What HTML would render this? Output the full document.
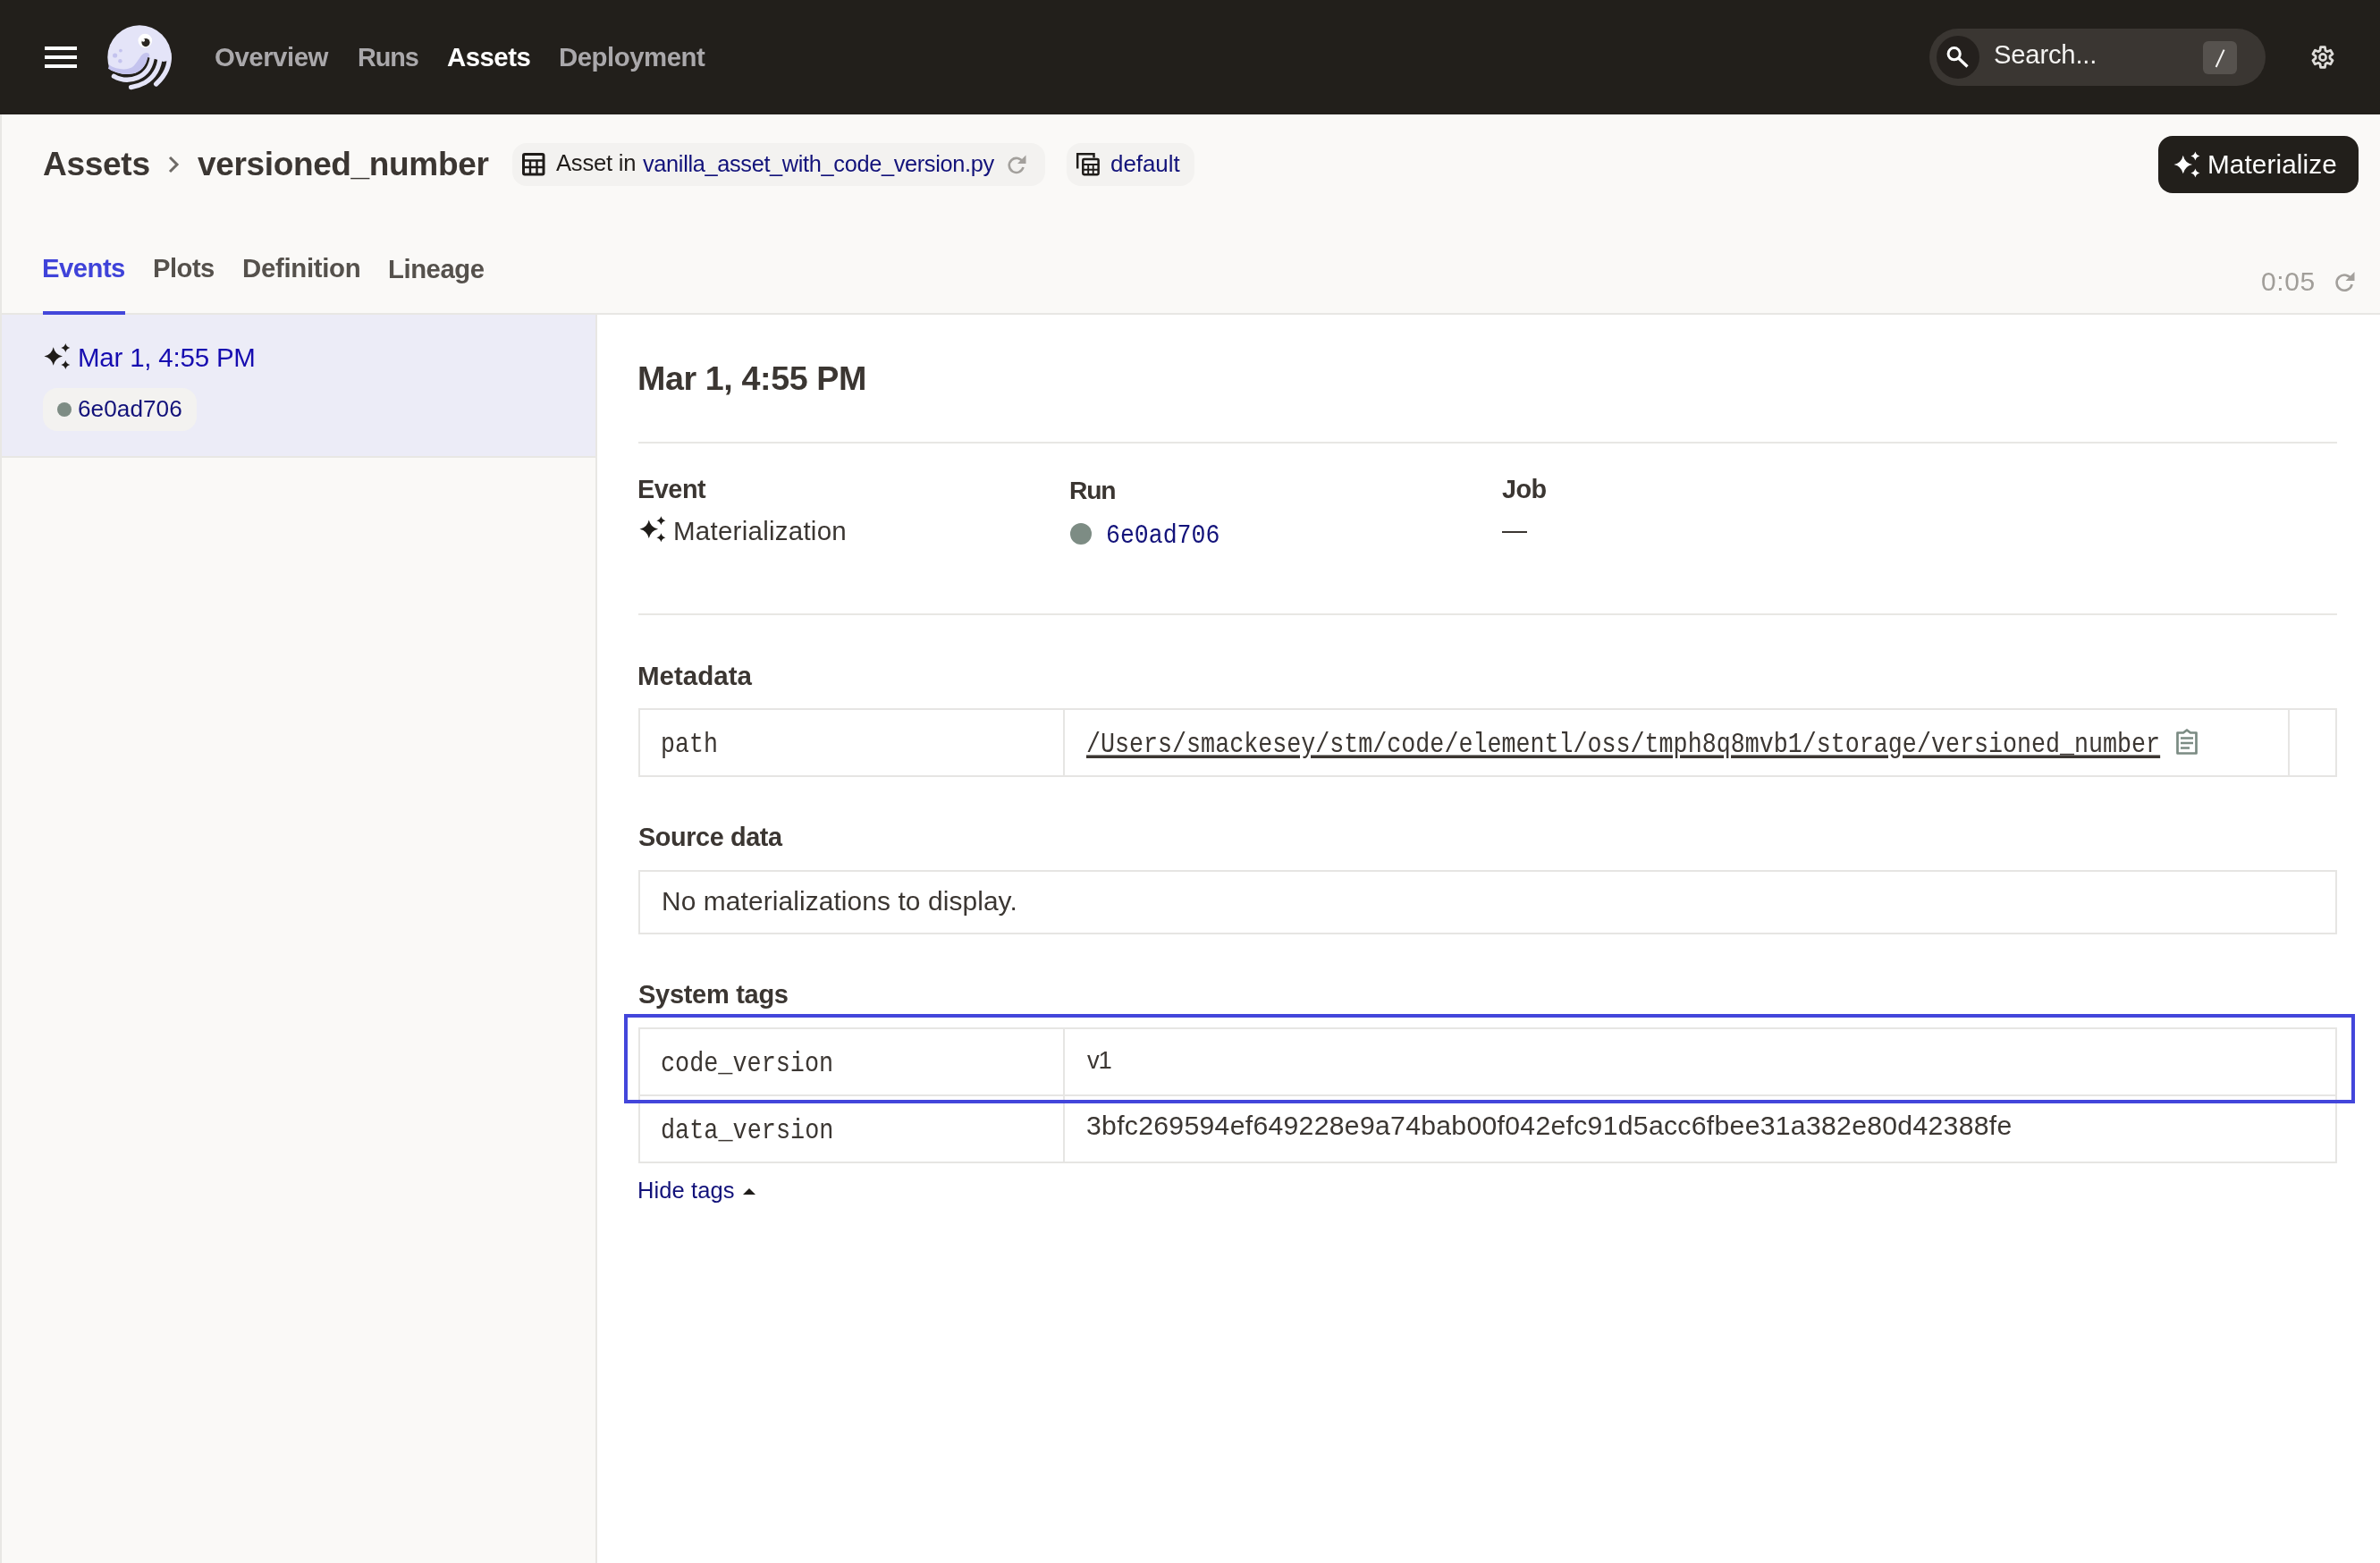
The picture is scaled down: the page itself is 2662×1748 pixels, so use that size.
<!DOCTYPE html>
<html><head><meta charset="utf-8">
<style>
html,body{margin:0;padding:0;width:2662px;height:1748px;overflow:hidden;background:#FAF9F7;}
body{position:relative;font-family:"Liberation Sans",sans-serif;}
.tx{position:absolute;white-space:pre;will-change:transform;}
.b{position:absolute;box-sizing:border-box;}
svg{position:absolute;overflow:visible;}
</style></head>
<body>
<!-- ===== header ===== -->
<div class="b" style="left:0;top:0;width:2662px;height:128px;background:#221F1B"></div>
<div class="b" style="left:50px;top:52px;width:36px;height:4px;background:#fff"></div>
<div class="b" style="left:50px;top:62px;width:36px;height:4px;background:#fff"></div>
<div class="b" style="left:50px;top:72px;width:36px;height:4px;background:#fff"></div>

<!-- logo -->
<svg style="left:115px;top:22px" width="82" height="82" viewBox="0 0 82 82">
  <defs>
    <clipPath id="lgbody">
      <path d="M0 0 H82 V45 L76 45.5 L67.7 47 L59.3 44.3 L50 42 C48.6 51.5 42.5 58.8 33 60.6 C24 62.2 14 59.8 4 54 L0 54 Z"/>
    </clipPath>
  </defs>
  <circle cx="41" cy="42" r="35.7" fill="#E4E4F8" clip-path="url(#lgbody)"/>
  <path d="M7 50.5 C15 56 27 57 33 53 C38 49.5 41 41 45.5 38 C48.5 36.3 52.3 37 52.3 40.5 L50 44 C48.6 51.5 42.5 58.8 33 60.6 C24 62.2 14 59.8 6 55 Z" fill="#C4C3EE" clip-path="url(#lgbody)"/>
  <circle cx="13.6" cy="40" r="2.6" fill="#C4C3EE"/>
  <circle cx="19.9" cy="34.6" r="1.9" fill="#C4C3EE"/>
  <circle cx="19.4" cy="46.2" r="2.2" fill="#C4C3EE"/>
  <circle cx="47.3" cy="23.6" r="7.8" fill="#FFFFFF"/>
  <circle cx="48" cy="25.6" r="4.6" fill="#2A2622"/>
  <circle cx="45.4" cy="23.0" r="1.7" fill="#FFFFFF"/>
  <g fill="none" stroke="#E4E4F8" stroke-width="5.3" stroke-linecap="round">
    <path d="M55.5 40 C54.5 51 49 60.5 39 64.8 C30 68.5 20 67.5 12.4 63.2"/>
    <path d="M64 42 C63.5 54 57 65 47 70.5 C42 73.2 37 74.8 31.6 75.6"/>
    <path d="M74 38 C75.5 50 71 61.5 59.6 72"/>
  </g>
</svg>

<!-- search -->
<div class="b" style="left:2158px;top:32px;width:376px;height:64px;border-radius:32px;background:#3A3632"></div>
<div class="b" style="left:2166px;top:40px;width:48px;height:48px;border-radius:24px;background:#24201D"></div>
<svg style="left:2166px;top:40px" width="48" height="48" viewBox="0 0 48 48">
  <circle cx="19.7" cy="20.2" r="6.6" fill="none" stroke="#FFFFFF" stroke-width="3"/>
  <path d="M24.5 25 L34.5 34.5" stroke="#FFFFFF" stroke-width="3.2" stroke-linecap="butt"/>
</svg>
<div class="b" style="left:2464px;top:46px;width:38px;height:37px;border-radius:6px;background:#56524E"></div>
<svg style="left:2464px;top:46px" width="38" height="37" viewBox="0 0 38 37">
  <path d="M23.6 9.6 L14.6 29" stroke="#F4F3F1" stroke-width="2" stroke-linecap="butt"/>
</svg>
<!-- gear -->
<svg style="left:2584px;top:50px" width="28" height="28" viewBox="0 0 28 28">
  <g transform="translate(14 14)" fill="none" stroke="#DEDCD9" stroke-width="2.8" stroke-linejoin="round">
    <path d="M-3.00 -7.42 L-2.41 -11.35 L2.41 -11.35 L3.00 -7.42 L4.93 -6.30 L8.62 -7.76 L11.03 -3.58 L7.92 -1.11 L7.92 1.11 L11.03 3.58 L8.62 7.76 L4.93 6.30 L3.00 7.42 L2.41 11.35 L-2.41 11.35 L-3.00 7.42 L-4.93 6.30 L-8.62 7.76 L-11.03 3.58 L-7.92 1.11 L-7.92 -1.11 L-11.03 -3.58 L-8.62 -7.76 L-4.93 -6.30 Z"/>
    <circle r="3.6" stroke-width="2.6"/>
  </g>
</svg>

<!-- ===== page ===== -->
<div class="b" style="left:0;top:128px;width:2px;height:1620px;background:#E8E7E4"></div>
<div class="b" style="left:2px;top:350px;width:2660px;height:2px;background:#E8E7E4"></div>

<!-- breadcrumb chevron -->
<svg style="left:186px;top:172px" width="16" height="24" viewBox="0 0 16 24">
  <path d="M4 4 L12 12 L4 20" fill="none" stroke="#6E6A66" stroke-width="3"/>
</svg>

<!-- tag 1 -->
<div class="b" style="left:573px;top:160px;width:596px;height:48px;border-radius:16px;background:#F3F2F0"></div>
<svg style="left:584px;top:171px" width="26" height="26" viewBox="0 0 26 26">
  <rect x="1.5" y="1.5" width="22.5" height="22.5" rx="1.5" fill="none" stroke="#1F1C19" stroke-width="3"/>
  <path d="M1.5 8.5 H24 M1.5 16 H24 M9 8.5 V24 M16.5 8.5 V24" stroke="#1F1C19" stroke-width="2.4"/>
</svg>
<svg style="left:1125px;top:172px" width="24" height="24" viewBox="0 0 24 24">
  <path d="M19 9.5 A8 8 0 1 0 19.5 15" fill="none" stroke="#A3A09C" stroke-width="2.6"/>
  <path d="M22.5 1.5 V11 H13 Z" fill="#A3A09C"/>
</svg>
<!-- tag 2 -->
<div class="b" style="left:1193px;top:160px;width:143px;height:48px;border-radius:16px;background:#F3F2F0"></div>
<svg style="left:1203px;top:170px" width="28" height="28" viewBox="0 0 28 28">
  <path d="M2.2 18.5 V2.3 H20.5 V6.5" fill="none" stroke="#1F1C19" stroke-width="2.5"/>
  <rect x="8.3" y="7.9" width="17.3" height="17.4" rx="1.2" fill="none" stroke="#1F1C19" stroke-width="2.5"/>
  <path d="M8.3 14 H25.6 M8.3 19.8 H25.6 M14.2 14 V25.3 M19.7 14 V25.3" stroke="#1F1C19" stroke-width="1.9"/>
</svg>

<!-- materialize button -->
<div class="b" style="left:2414px;top:152px;width:224px;height:64px;border-radius:16px;background:#221F1B"></div>
<svg style="left:2430px;top:168px" width="32" height="32" viewBox="0 0 32 32">
  <g fill="#FFFFFF">
    <path d="M11.80 5.70 Q13.65 14.15 22.10 16.00 Q13.65 17.85 11.80 26.30 Q9.95 17.85 1.50 16.00 Q9.95 14.15 11.80 5.70 Z M25.40 1.50 Q26.30 5.60 30.40 6.50 Q26.30 7.40 25.40 11.50 Q24.50 7.40 20.40 6.50 Q24.50 5.60 25.40 1.50 Z M25.40 20.50 Q26.30 24.60 30.40 25.50 Q26.30 26.40 25.40 30.50 Q24.50 26.40 20.40 25.50 Q24.50 24.60 25.40 20.50 Z"/>
  </g>
</svg>

<!-- tab underline -->
<div class="b" style="left:48px;top:348px;width:92px;height:4px;background:#4347DA"></div>
<!-- refresh near time -->
<svg style="left:2609px;top:302px" width="26" height="26" viewBox="0 0 26 26">
  <path d="M21 10.5 A8.6 8.6 0 1 0 21.6 16" fill="none" stroke="#A3A09C" stroke-width="2.6"/>
  <path d="M24.5 2 V12 H14.5 Z" fill="#A3A09C"/>
</svg>

<!-- ===== sidebar ===== -->
<div class="b" style="left:2px;top:352px;width:664px;height:158px;background:#ECECF7"></div>
<div class="b" style="left:2px;top:510px;width:664px;height:2px;background:#E8E7E4"></div>
<div class="b" style="left:666px;top:352px;width:2px;height:1396px;background:#E8E7E4"></div>
<svg style="left:48px;top:382px" width="32" height="32" viewBox="0 0 32 32">
  <g fill="#1F1C19"><path d="M11.70 6.20 Q13.55 14.65 22.00 16.50 Q13.55 18.35 11.70 26.80 Q9.85 18.35 1.40 16.50 Q9.85 14.65 11.70 6.20 Z M25.30 2.00 Q26.20 6.10 30.30 7.00 Q26.20 7.90 25.30 12.00 Q24.40 7.90 20.30 7.00 Q24.40 6.10 25.30 2.00 Z M25.30 21.00 Q26.20 25.10 30.30 26.00 Q26.20 26.90 25.30 31.00 Q24.40 26.90 20.30 26.00 Q24.40 25.10 25.30 21.00 Z"/></g>
</svg>
<div class="b" style="left:48px;top:434px;width:172px;height:48px;border-radius:16px;background:#F3F2F0"></div>
<div class="b" style="left:64px;top:449.5px;width:16px;height:16px;border-radius:8px;background:#7D8C84"></div>

<!-- ===== main ===== -->
<div class="b" style="left:668px;top:352px;width:1994px;height:1396px;background:#FFFFFF"></div>
<div class="b" style="left:714px;top:494px;width:1900px;height:2px;background:#E8E7E4"></div>
<div class="b" style="left:714px;top:686px;width:1900px;height:2px;background:#E8E7E4"></div>
<svg style="left:713px;top:576px" width="32" height="32" viewBox="0 0 32 32">
  <g fill="#1F1C19"><path d="M12.80 5.50 Q14.65 13.95 23.10 15.80 Q14.65 17.65 12.80 26.10 Q10.95 17.65 2.50 15.80 Q10.95 13.95 12.80 5.50 Z M26.40 1.30 Q27.30 5.40 31.40 6.30 Q27.30 7.20 26.40 11.30 Q25.50 7.20 21.40 6.30 Q25.50 5.40 26.40 1.30 Z M26.40 20.30 Q27.30 24.40 31.40 25.30 Q27.30 26.20 26.40 30.30 Q25.50 26.20 21.40 25.30 Q25.50 24.40 26.40 20.30 Z"/></g>
</svg>
<div class="b" style="left:1197px;top:585px;width:24px;height:24px;border-radius:12px;background:#7D8C84"></div>
<div class="b" style="left:1680px;top:594px;width:28px;height:2.4px;background:#3B3632"></div>

<!-- metadata table -->
<div class="b" style="left:714px;top:792px;width:1900px;height:77px;border:2px solid #E6E5E3"></div>
<div class="b" style="left:1188.5px;top:792px;width:2px;height:77px;background:#E6E5E3"></div>
<div class="b" style="left:2559px;top:792px;width:2px;height:77px;background:#E6E5E3"></div>
<svg style="left:2432px;top:814px" width="28" height="32" viewBox="0 0 28 32">
  <path d="M3.5 5.5 H10 L14 2.5 L18 5.5 H24.5 V28.5 H3.5 Z" fill="none" stroke="#7B8B83" stroke-width="2.7" stroke-linejoin="round"/>
  <path d="M7 11.5 H21 M7 17 H21 M7 22.5 H17" stroke="#7B8B83" stroke-width="2.7"/>
</svg>

<!-- source data table -->
<div class="b" style="left:714px;top:973px;width:1900px;height:72px;border:2px solid #E6E5E3"></div>

<!-- system tags table -->
<div class="b" style="left:714px;top:1149px;width:1900px;height:152px;border:2px solid #E6E5E3"></div>
<div class="b" style="left:714px;top:1224px;width:1900px;height:2px;background:#E6E5E3"></div>
<div class="b" style="left:1188.5px;top:1149px;width:2px;height:152px;background:#E6E5E3"></div>
<!-- highlight -->
<div class="b" style="left:698px;top:1134px;width:1936px;height:100px;border:4.5px solid #4346DB"></div>
<!-- hide tags triangle -->
<svg style="left:830px;top:1328px" width="16" height="10" viewBox="0 0 16 10">
  <path d="M1 8 L8 1 L15 8 Z" fill="#1F1C19"/>
</svg>

<div class="tx" style='left:240.12px;top:49.11px;font-family:"Liberation Sans",sans-serif;font-weight:700;font-size:29.40px;line-height:29.40px;letter-spacing:-0.467px;color:#AAA8AB;'>Overview</div>
<div class="tx" style='left:399.98px;top:49.61px;font-family:"Liberation Sans",sans-serif;font-weight:700;font-size:28.82px;line-height:28.82px;letter-spacing:-1.058px;color:#AAA8AB;'>Runs</div>
<div class="tx" style='left:500.32px;top:49.13px;font-family:"Liberation Sans",sans-serif;font-weight:700;font-size:29.37px;line-height:29.37px;letter-spacing:-0.497px;color:#FFFFFF;'>Assets</div>
<div class="tx" style='left:624.94px;top:49.12px;font-family:"Liberation Sans",sans-serif;font-weight:700;font-size:29.39px;line-height:29.39px;letter-spacing:-0.473px;color:#AAA8AB;'>Deployment</div>
<div class="tx" style='left:2230.24px;top:46.89px;font-family:"Liberation Sans",sans-serif;font-weight:400;font-size:29.19px;line-height:29.19px;letter-spacing:-0.183px;color:#F4F3F1;'>Search...</div>
<div class="tx" style='left:47.99px;top:165.33px;font-family:"Liberation Sans",sans-serif;font-weight:700;font-size:37.14px;line-height:37.14px;letter-spacing:-0.346px;color:#3B3632;'>Assets</div>
<div class="tx" style='left:220.63px;top:165.41px;font-family:"Liberation Sans",sans-serif;font-weight:700;font-size:37.05px;line-height:37.05px;letter-spacing:-0.377px;color:#3B3632;'>versioned_number</div>
<div class="tx" style='left:621.50px;top:170.32px;font-family:"Liberation Sans",sans-serif;font-weight:400;font-size:25.62px;line-height:25.62px;letter-spacing:-0.232px;color:#211D1A;'>Asset in</div>
<div class="tx" style='left:718.90px;top:170.54px;font-family:"Liberation Sans",sans-serif;font-weight:400;font-size:25.37px;line-height:25.37px;letter-spacing:-0.348px;color:#12127A;'>vanilla_asset_with_code_version.py</div>
<div class="tx" style='left:1241.66px;top:169.71px;font-family:"Liberation Sans",sans-serif;font-weight:400;font-size:25.98px;line-height:25.98px;letter-spacing:-0.051px;color:#12127A;'>default</div>
<div class="tx" style='left:2469.22px;top:168.80px;font-family:"Liberation Sans",sans-serif;font-weight:400;font-size:29.76px;line-height:29.76px;letter-spacing:0.092px;color:#FFFFFF;'>Materialize</div>
<div class="tx" style='left:47.15px;top:285.56px;font-family:"Liberation Sans",sans-serif;font-weight:700;font-size:29.23px;line-height:29.23px;letter-spacing:-0.490px;color:#3F43D9;'>Events</div>
<div class="tx" style='left:171.26px;top:285.61px;font-family:"Liberation Sans",sans-serif;font-weight:700;font-size:29.16px;line-height:29.16px;letter-spacing:-0.488px;color:#55514C;'>Plots</div>
<div class="tx" style='left:271.24px;top:285.42px;font-family:"Liberation Sans",sans-serif;font-weight:700;font-size:29.39px;line-height:29.39px;letter-spacing:-0.306px;color:#55514C;'>Definition</div>
<div class="tx" style='left:434.45px;top:285.50px;font-family:"Liberation Sans",sans-serif;font-weight:700;font-size:29.29px;line-height:29.29px;letter-spacing:-0.433px;color:#55514C;'>Lineage</div>
<div class="tx" style='left:2528.80px;top:300.42px;font-family:"Liberation Sans",sans-serif;font-weight:400;font-size:29.98px;line-height:29.98px;letter-spacing:0.614px;color:#A19E99;'>0:05</div>
<div class="tx" style='left:87.44px;top:384.85px;font-family:"Liberation Sans",sans-serif;font-weight:400;font-size:29.47px;line-height:29.47px;letter-spacing:-0.197px;color:#160CB0;'>Mar 1, 4:55 PM</div>
<div class="tx" style='left:87.49px;top:444.26px;font-family:"Liberation Sans",sans-serif;font-weight:400;font-size:26.17px;line-height:26.17px;letter-spacing:0.052px;color:#12127A;'>6e0ad706</div>
<div class="tx" style='left:713.16px;top:405.20px;font-family:"Liberation Sans",sans-serif;font-weight:700;font-size:37.65px;line-height:37.65px;letter-spacing:-0.398px;color:#3B3632;'>Mar 1, 4:55 PM</div>
<div class="tx" style='left:712.98px;top:533.47px;font-family:"Liberation Sans",sans-serif;font-weight:700;font-size:28.85px;line-height:28.85px;letter-spacing:-0.469px;color:#3B3632;'>Event</div>
<div class="tx" style='left:1196.42px;top:533.98px;font-family:"Liberation Sans",sans-serif;font-weight:700;font-size:28.26px;line-height:28.26px;letter-spacing:-1.178px;color:#3B3632;'>Run</div>
<div class="tx" style='left:1679.92px;top:533.28px;font-family:"Liberation Sans",sans-serif;font-weight:700;font-size:28.85px;line-height:28.85px;letter-spacing:-0.613px;color:#3B3632;'>Job</div>
<div class="tx" style='left:753.44px;top:578.60px;font-family:"Liberation Sans",sans-serif;font-weight:400;font-size:29.53px;line-height:29.53px;letter-spacing:0.246px;color:#3B3632;'>Materialization</div>
<div class="tx" style='left:1236.94px;top:586.74px;font-family:"Liberation Mono",monospace;font-weight:400;font-size:26.53px;line-height:26.53px;letter-spacing:0.000px;color:#12127A;transform:scaleY(1.142);transform-origin:0 20.16px;'>6e0ad706</div>
<div class="tx" style='left:713.03px;top:740.79px;font-family:"Liberation Sans",sans-serif;font-weight:700;font-size:29.54px;line-height:29.54px;letter-spacing:-0.017px;color:#3B3632;'>Metadata</div>
<div class="tx" style='left:738.91px;top:821.18px;font-family:"Liberation Mono",monospace;font-weight:400;font-size:26.60px;line-height:26.60px;letter-spacing:0.000px;color:#3B3632;transform:scaleY(1.179);transform-origin:0 20.22px;'>path</div>
<div class="tx" style='left:1214.80px;top:821.12px;font-family:"Liberation Mono",monospace;font-weight:400;font-size:26.69px;line-height:26.69px;letter-spacing:0.000px;color:#3B3632;transform:scaleY(1.175);transform-origin:0 20.28px;text-decoration:underline;text-decoration-thickness:2.5px;text-underline-offset:3px;'>/Users/smackesey/stm/code/elementl/oss/tmph8q8mvb1/storage/versioned_number</div>
<div class="tx" style='left:714.13px;top:922.48px;font-family:"Liberation Sans",sans-serif;font-weight:700;font-size:28.85px;line-height:28.85px;letter-spacing:-0.406px;color:#3B3632;'>Source data</div>
<div class="tx" style='left:739.81px;top:993.47px;font-family:"Liberation Sans",sans-serif;font-weight:400;font-size:29.92px;line-height:29.92px;letter-spacing:0.090px;color:#3B3632;'>No materializations to display.</div>
<div class="tx" style='left:714.13px;top:1098.31px;font-family:"Liberation Sans",sans-serif;font-weight:700;font-size:29.04px;line-height:29.04px;letter-spacing:-0.303px;color:#3B3632;'>System tags</div>
<div class="tx" style='left:739.29px;top:1177.81px;font-family:"Liberation Mono",monospace;font-weight:400;font-size:26.82px;line-height:26.82px;letter-spacing:0.000px;color:#3B3632;transform:scaleY(1.169);transform-origin:0 20.39px;'>code_version</div>
<div class="tx" style='left:1215.90px;top:1171.62px;font-family:"Liberation Sans",sans-serif;font-weight:400;font-size:27.50px;line-height:27.50px;letter-spacing:-1.200px;color:#3B3632;'>v1</div>
<div class="tx" style='left:739.02px;top:1252.59px;font-family:"Liberation Mono",monospace;font-weight:400;font-size:26.86px;line-height:26.86px;letter-spacing:0.000px;color:#3B3632;transform:scaleY(1.168);transform-origin:0 20.41px;'>data_version</div>
<div class="tx" style='left:1215.29px;top:1244.38px;font-family:"Liberation Sans",sans-serif;font-weight:400;font-size:30.15px;line-height:30.15px;letter-spacing:0.310px;color:#3B3632;'>3bfc269594ef649228e9a74bab00f042efc91d5acc6fbee31a382e80d42388fe</div>
<div class="tx" style='left:713.36px;top:1319.20px;font-family:"Liberation Sans",sans-serif;font-weight:400;font-size:25.53px;line-height:25.53px;letter-spacing:0.085px;color:#12127A;'>Hide tags</div>
</body></html>
